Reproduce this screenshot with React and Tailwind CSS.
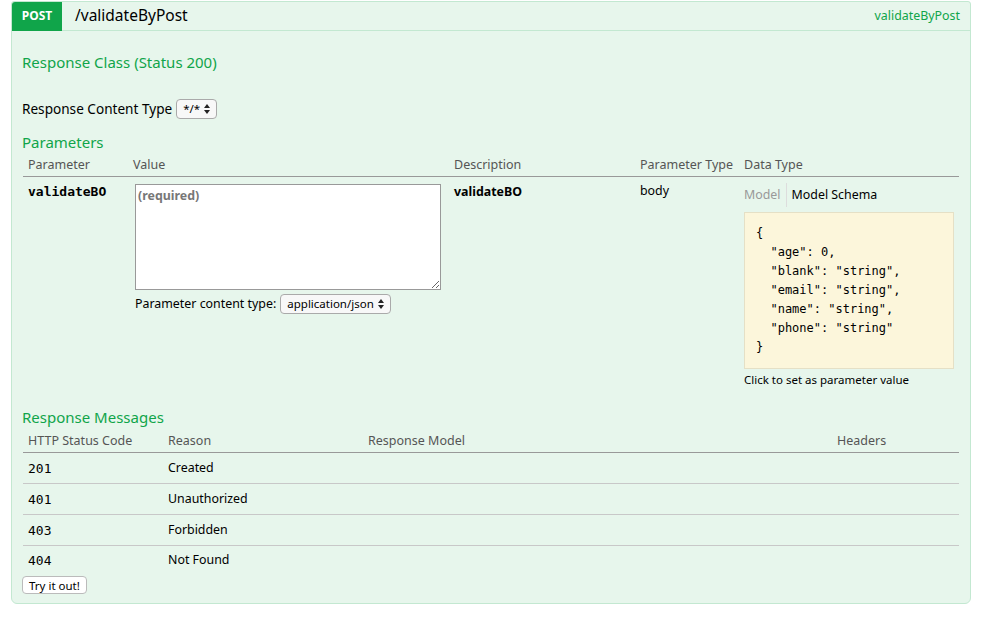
import { useState } from "react";

const sans = { fontFamily: '"Noto Sans", "Open Sans", sans-serif' };

function SelectBox({ label, className }) {
  return (
    <span
      className={
        "inline-flex items-center gap-[4px] rounded-[4px] border border-[#aaa] bg-[#f8f8f8] px-[6px] h-[20px] text-[11.5px] text-black align-middle " +
        (className || "")
      }
    >
      {label}
      <svg width="6" height="10" viewBox="0 0 6 10">
        <path d="M3 0 L6 4 L0 4 Z" fill="#222" />
        <path d="M0 6 L6 6 L3 10 Z" fill="#222" />
      </svg>
    </span>
  );
}

function ParamsTable() {
  const [tab, setTab] = useState("schema");
  return (
    <div className="mx-[11px] mt-[2px]">
      <div className="grid grid-cols-[105px_321px_186px_104px_1fr] border-b border-[#999] text-[12.5px] text-[#555] h-[22px] items-center">
        <div className="pl-[5px]">Parameter</div>
        <div className="pl-[5px]">Value</div>
        <div className="pl-[5px]">Description</div>
        <div className="pl-[5px]">Parameter Type</div>
        <div className="pl-[5px]">Data Type</div>
      </div>
      <div className="grid grid-cols-[105px_321px_186px_104px_1fr] text-[12.4px] text-black pt-[7px]">
        <div className="pl-[5px] font-['DejaVu_Sans_Mono',monospace] font-bold text-[13px] leading-[16px]">
          validateBO
        </div>
        <div className="pl-[7px]">
          <textarea
            placeholder="(required)"
            className="block w-[306px] h-[106px] bg-white border border-[#999] p-[2px] text-[12.4px] font-bold placeholder:text-[#777] outline-none"
            style={sans}
          />
          <div className="mt-[4px] flex items-center gap-[4px] text-[12.4px]">
            Parameter content type:
            <SelectBox label="application/json" />
          </div>
        </div>
        <div className="pl-[5px] font-bold leading-[16px]">validateBO</div>
        <div className="pl-[5px] leading-[14px]">body</div>
        <div className="pl-[5px]">
          <div className="flex items-center h-[24px] mt-[-1px] text-[12.4px]">
            <span
              onClick={() => setTab("model")}
              className={"pr-[5px] cursor-pointer " + (tab === "model" ? "text-black" : "text-[#999]")}
            >
              Model
            </span>
            <span className="w-px h-[24px] bg-[#ddd]" />
            <span
              onClick={() => setTab("schema")}
              className={"pl-[5px] cursor-pointer " + (tab === "schema" ? "text-black" : "text-[#999]")}
            >
              Model Schema
            </span>
          </div>
          <div className="mt-[5px] w-[210px] h-[157px] bg-[#fcf6db] border border-[#e5e0c6] px-[11px] pt-[11px]">
            <pre className="font-['DejaVu_Sans_Mono',monospace] text-[12px] leading-[19px] text-black m-0">
{`{
  "age": 0,
  "blank": "string",
  "email": "string",
  "name": "string",
  "phone": "string"
}`}
            </pre>
          </div>
          <div className="text-[11.5px] mt-[2px]">Click to set as parameter value</div>
        </div>
      </div>
    </div>
  );
}

function ResponsesTable() {
  const rows = [
    ["201", "Created"],
    ["401", "Unauthorized"],
    ["403", "Forbidden"],
    ["404", "Not Found"],
  ];
  return (
    <div className="mx-[11px] mt-[3px]">
      <div className="grid grid-cols-[140px_200px_469px_1fr] border-b border-[#999] text-[12.5px] text-[#555] h-[22px] items-center">
        <div className="pl-[5px]">HTTP Status Code</div>
        <div className="pl-[5px]">Reason</div>
        <div className="pl-[5px]">Response Model</div>
        <div className="pl-[5px]">Headers</div>
      </div>
      {rows.map((r, i) => (
        <div
          key={r[0]}
          className={
            "grid grid-cols-[140px_200px_469px_1fr] items-center text-[12.4px] text-black " +
            (i < rows.length - 1 ? "h-[31px] border-b border-[#c8c8c8]" : "h-[29px]")
          }
        >
          <div className="pl-[5px] font-['DejaVu_Sans_Mono',monospace] text-[13px]">{r[0]}</div>
          <div className="pl-[5px]">{r[1]}</div>
          <div />
          <div />
        </div>
      ))}
    </div>
  );
}

export default function App() {
  return (
    <div className="min-h-screen bg-white pl-[11px] pr-[22px] pt-px" style={sans}>
      <div className="border border-[#c3e8d1] bg-[#e7f6ec] rounded-b-[6px] rounded-t-[3px]">
        <div className="flex items-center h-[29px] border-b border-[#c3e8d1]">
          <div className="bg-[#10a54a] text-white text-[12px] font-bold h-[29px] w-[50px] flex items-center justify-center rounded-tl-[3px]">
            POST
          </div>
          <div className="ml-[13px] text-[15.5px] text-black">/validateByPost</div>
          <div className="ml-auto mr-[10px] text-[12.4px] text-[#10a54a]">validateByPost</div>
        </div>

        <div className="px-[10px] pt-[20px]">
          <h4 className="text-[15px] text-[#10a54a] leading-[22px]">Response Class (Status 200)</h4>
          <div className="mt-[25px] flex items-center gap-[4px] text-[13.6px] text-black h-[22px]">
            Response Content Type
            <SelectBox label="*/*" />
          </div>
          <h4 className="mt-[11px] text-[15px] text-[#10a54a] leading-[22px]">Parameters</h4>
        </div>
        <ParamsTable />

        <div className="px-[10px] pt-[18px]">
          <h4 className="text-[15px] text-[#10a54a] leading-[22px]">Response Messages</h4>
        </div>
        <ResponsesTable />

        <div className="flex px-[10px] pt-[1px] pb-[9px]">
          <button className="h-[18px] px-[6px] rounded-[4px] border border-[#bbb] bg-white text-[11.5px] text-black leading-none">
            Try it out!
          </button>
        </div>
      </div>
    </div>
  );
}
